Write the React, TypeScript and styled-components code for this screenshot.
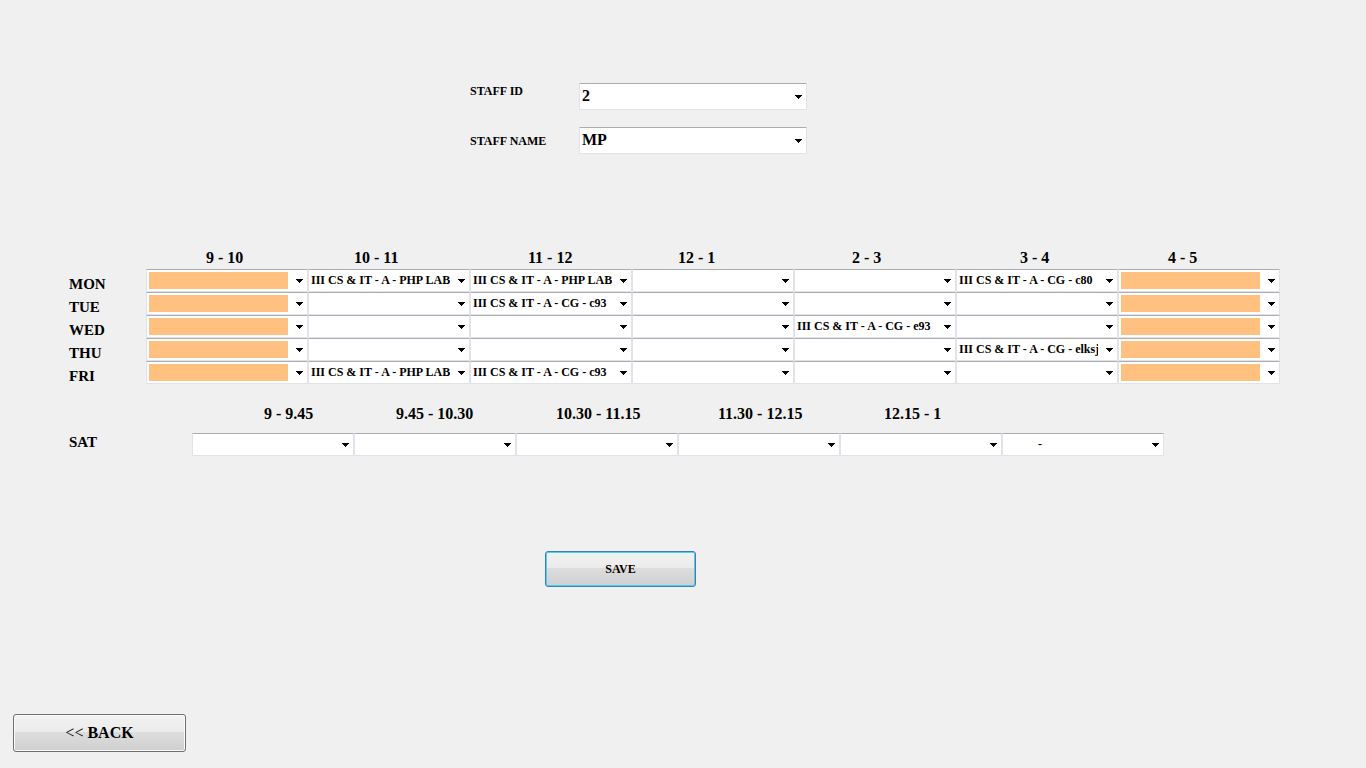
import React from 'react';
import styled, { createGlobalStyle } from 'styled-components';

const GlobalStyle = createGlobalStyle`
  *, *::before, *::after { box-sizing: border-box; }
  body {
    margin: 0;
    background: #f0f0f0;
    color: #000;
    font-family: "Liberation Serif", "Times New Roman", serif;
    font-weight: bold;
  }
`;

const Page = styled.main`
  display: flex;
  flex-direction: column;
  min-height: 100vh;
  padding: 83px 0 16px;
`;

const StaffForm = styled.form`
  display: flex;
  flex-direction: column;
  align-items: center;
  gap: 17px;
  padding-right: 89px;
`;

const Field = styled.div<{ $align: 'start' | 'center' }>`
  display: grid;
  grid-template-columns: 109px 228px;
  align-items: ${(p) => p.$align};
`;

const FieldLabel = styled.label`
  font-size: 12px;
  line-height: 16px;
`;

const Frame = styled.div`
  display: grid;
  grid-template-columns: minmax(0, 1fr);
  align-items: center;
  background: #fff;
  border: 1px solid #e2e3ea;
  border-top-color: #abadb3;
  border-radius: 1px;
`;

const Select = styled.select<{ $large?: boolean; $marked?: boolean }>`
  grid-area: 1 / 1;
  width: 100%;
  height: ${(p) => (p.$large ? 25 : 21)}px;
  margin: 0;
  padding: 2px 19px ${(p) => (p.$marked ? 2 : 4)}px 2px;
  appearance: none;
  border: 0;
  border-radius: 0;
  outline: 0;
  background: ${(p) => (p.$marked ? '#ffc080' : '#fff')};
  background-clip: content-box;
  color: #000;
  font-family: inherit;
  font-weight: bold;
  font-size: ${(p) => (p.$large ? 16 : 12)}px;
  line-height: 16px;
  text-overflow: clip;
`;

const Arrow = styled.svg`
  grid-area: 1 / 1;
  justify-self: end;
  margin-right: 4px;
  margin-top: 1px;
  pointer-events: none;
`;

const Timetable = styled.table<{ $right: number }>`
  width: calc(100% - 66px - ${(p) => p.$right}px);
  margin-left: 66px;
  table-layout: fixed;
  border-collapse: collapse;
`;

const LabelColumn = styled.col<{ $width: number }>`
  width: ${(p) => p.$width}px;
`;

const Period = styled.th<{ $indent: number; $height: number }>`
  height: ${(p) => p.$height}px;
  padding: 1px 0 0 ${(p) => p.$indent}px;
  text-align: left;
  vertical-align: top;
  font-size: 16px;
  line-height: 16px;
  white-space: nowrap;
`;

const Day = styled.th<{ $top: number }>`
  padding: ${(p) => p.$top}px 0 0 3px;
  text-align: left;
  vertical-align: top;
  font-size: 15px;
  line-height: 16px;
`;

const Cell = styled.td`
  padding: 0;
`;

const Week = styled.section`
  padding-top: 95px;
`;

const Saturday = styled.section`
  padding-top: 21px;
`;

const SaveRow = styled.div`
  display: flex;
  justify-content: center;
  padding: 95px 125px 24px 0;
`;

const Footer = styled.footer`
  margin-top: auto;
  padding-left: 13px;
`;

const Button = styled.button<{ $primary?: boolean }>`
  display: block;
  width: ${(p) => (p.$primary ? 151 : 173)}px;
  height: ${(p) => (p.$primary ? 36 : 38)}px;
  padding: 0;
  border: 1px solid ${(p) => (p.$primary ? '#3c7fb1' : '#707070')};
  border-radius: 3px;
  box-shadow: inset 0 0 0 1px ${(p) => (p.$primary ? '#48d0f5' : '#fafafa')};
  background: linear-gradient(#f2f2f2, #ebebeb 48%, #dddddd 48%, #cfcfcf);
  color: #000;
  font-family: inherit;
  font-weight: bold;
  font-size: ${(p) => (p.$primary ? 12 : 16)}px;
  line-height: 16px;
`;

const Chevrons = styled.span`
  font-weight: normal;
`;

interface ComboProps {
  id?: string;
  label?: string;
  value: string;
  large?: boolean;
  marked?: boolean;
}

function Combo({ id, label, value, large, marked }: ComboProps) {
  return (
    <Frame>
      <Select id={id} aria-label={label} $large={large} $marked={marked} defaultValue={value}>
        <option value={value}>{value}</option>
      </Select>
      <Arrow width="7" height="4" viewBox="0 0 7 4" shapeRendering="crispEdges" aria-hidden="true">
        <path d="M0 0h7v1H0zM1 1h5v1H1zM2 2h3v1H2zM3 3h1v1H3z" />
      </Arrow>
    </Frame>
  );
}

interface PeriodInfo {
  name: string;
  indent: number;
}

const weekPeriods: PeriodInfo[] = [
  { name: '9 - 10', indent: 60 },
  { name: '10 - 11', indent: 46 },
  { name: '11 - 12', indent: 58 },
  { name: '12 - 1', indent: 46 },
  { name: '2 - 3', indent: 58 },
  { name: '3 - 4', indent: 64 },
  { name: '4 - 5', indent: 50 },
];

const satPeriods: PeriodInfo[] = [
  { name: '9 - 9.45', indent: 72 },
  { name: '9.45 - 10.30', indent: 42 },
  { name: '10.30 - 11.15', indent: 40 },
  { name: '11.30 - 12.15', indent: 40 },
  { name: '12.15 - 1', indent: 44 },
  { name: '', indent: 0 },
];

const PHP = 'III CS & IT - A - PHP LAB - c93';

const week = [
  { day: 'MON', slots: ['', PHP, PHP, '', '', 'III CS & IT - A - CG - c80', ''] },
  { day: 'TUE', slots: ['', '', 'III CS & IT - A - CG - c93', '', '', '', ''] },
  { day: 'WED', slots: ['', '', '', '', 'III CS & IT - A - CG - e93', '', ''] },
  { day: 'THU', slots: ['', '', '', '', '', 'III CS & IT - A - CG - elksj', ''] },
  { day: 'FRI', slots: ['', PHP, 'III CS & IT - A - CG - c93', '', '', '', ''] },
];

const satSlots = ['', '', '', '', '', '\u00a0'.repeat(11) + '-'];

export default function App() {
  return (
    <>
      <GlobalStyle />
      <Page>
        <StaffForm>
          <Field $align="start">
            <FieldLabel htmlFor="staff-id">STAFF ID</FieldLabel>
            <Combo id="staff-id" value="2" large />
          </Field>
          <Field $align="center">
            <FieldLabel htmlFor="staff-name">STAFF NAME</FieldLabel>
            <Combo id="staff-name" value="MP" large />
          </Field>
        </StaffForm>

        <Week>
          <Timetable $right={86}>
            <colgroup>
              <LabelColumn $width={80} />
              {weekPeriods.map((p) => (
                <col key={p.name} />
              ))}
            </colgroup>
            <thead>
              <tr>
                <Cell />
                {weekPeriods.map((p) => (
                  <Period key={p.name} scope="col" $indent={p.indent} $height={20}>
                    {p.name}
                  </Period>
                ))}
              </tr>
            </thead>
            <tbody>
              {week.map((row) => (
                <tr key={row.day}>
                  <Day scope="row" $top={7}>{row.day}</Day>
                  {row.slots.map((slot, i) => (
                    <Cell key={weekPeriods[i].name}>
                      <Combo
                        label={`${row.day} ${weekPeriods[i].name}`}
                        value={slot}
                        marked={i === 0 || i === row.slots.length - 1}
                      />
                    </Cell>
                  ))}
                </tr>
              ))}
            </tbody>
          </Timetable>
        </Week>

        <Saturday>
          <Timetable $right={202}>
            <colgroup>
              <LabelColumn $width={126} />
              {satPeriods.map((p) => (
                <col key={p.name} />
              ))}
            </colgroup>
            <thead>
              <tr>
                <Cell />
                {satPeriods.map((p) => (
                  <Period key={p.name} scope="col" $indent={p.indent} $height={28}>
                    {p.name}
                  </Period>
                ))}
              </tr>
            </thead>
            <tbody>
              <tr>
                <Day scope="row" $top={1}>SAT</Day>
                {satSlots.map((slot, i) => (
                  <Cell key={satPeriods[i].name}>
                    <Combo label={`SAT ${satPeriods[i].name}`} value={slot} />
                  </Cell>
                ))}
              </tr>
            </tbody>
          </Timetable>
        </Saturday>

        <SaveRow>
          <Button type="button" $primary>SAVE</Button>
        </SaveRow>

        <Footer>
          <Button type="button"><Chevrons>&lt;&lt;</Chevrons> BACK</Button>
        </Footer>
      </Page>
    </>
  );
}
